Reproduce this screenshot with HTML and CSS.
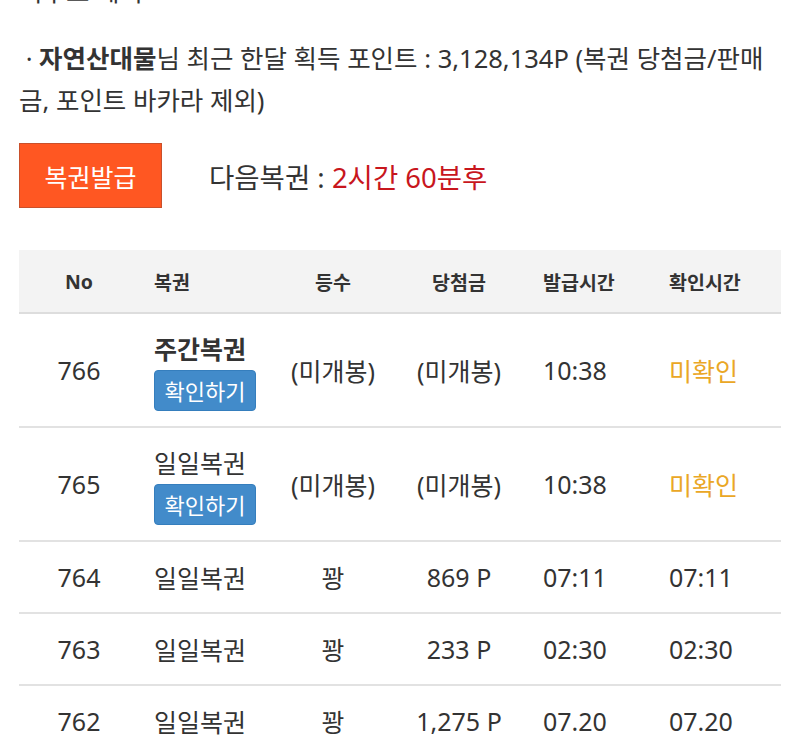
FILE: index.html
```html
<!DOCTYPE html>
<html lang="ko">
<head>
    <meta charset="UTF-8">
    <meta name="viewport" content="width=device-width, initial-scale=1.0">
    <title>복권</title>
    <link rel="stylesheet" href="styles.css">
</head>
<body>
    <!-- Notes -->
    <p class="note cut">서수표 제외</p>
    <p class="note">&nbsp;· <b>자연산대물</b>님 최근 한달 획득 포인트 : 3,128,134P (복권 당첨금/판매금, 포인트 바카라 제외)</p>

    <!-- Issue bar -->
    <div class="issue-bar">
        <button class="issue-btn">복권발급</button>
        <span class="next">다음복권 : <span class="next-time">2시간 60분후</span></span>
    </div>

    <!-- Lottery list -->
    <table class="lotto-table">
        <thead>
            <tr>
                <th class="col-no">No</th>
                <th class="col-name">복권</th>
                <th class="col-rank">등수</th>
                <th class="col-prize">당첨금</th>
                <th class="col-issue">발급시간</th>
                <th class="col-check">확인시간</th>
            </tr>
        </thead>
        <tbody>
            <tr class="tall">
                <td class="col-no">766</td>
                <td class="col-name"><b class="name-bold">주간복권</b><button class="check-btn">확인하기</button></td>
                <td class="col-rank">(미개봉)</td>
                <td class="col-prize">(미개봉)</td>
                <td class="col-issue">10:38</td>
                <td class="col-check unchecked">미확인</td>
            </tr>
            <tr class="tall">
                <td class="col-no">765</td>
                <td class="col-name">일일복권<button class="check-btn">확인하기</button></td>
                <td class="col-rank">(미개봉)</td>
                <td class="col-prize">(미개봉)</td>
                <td class="col-issue">10:38</td>
                <td class="col-check unchecked">미확인</td>
            </tr>
            <tr>
                <td class="col-no">764</td>
                <td class="col-name">일일복권</td>
                <td class="col-rank">꽝</td>
                <td class="col-prize">869 P</td>
                <td class="col-issue">07:11</td>
                <td class="col-check">07:11</td>
            </tr>
            <tr>
                <td class="col-no">763</td>
                <td class="col-name">일일복권</td>
                <td class="col-rank">꽝</td>
                <td class="col-prize">233 P</td>
                <td class="col-issue">02:30</td>
                <td class="col-check">02:30</td>
            </tr>
            <tr>
                <td class="col-no">762</td>
                <td class="col-name">일일복권</td>
                <td class="col-rank">꽝</td>
                <td class="col-prize">1,275 P</td>
                <td class="col-issue">07.20</td>
                <td class="col-check">07.20</td>
            </tr>
        </tbody>
    </table>
</body>
</html>
```

FILE: styles.css
```css
/* Basic Styling */
body {
    font-family: "Noto Sans", "Noto Sans CJK KR", sans-serif;
    margin: 0;
    padding: 0 19px;
    color: #333;
    background-color: #fff;
    font-size: 25px;
    overflow: hidden;
}
/* Notes */
.note {
    margin: 25px 0 0;
    line-height: 42px;
    font-size: 25.5px;
    word-break: break-all;
}
.note.cut { margin-top: -30px; }
.note b { font-weight: bold; }
/* Issue Bar */
.issue-bar {
    display: flex;
    align-items: center;
    margin-top: 22px;
}
.issue-btn {
    width: 143px;
    height: 65px;
    background-color: #ff5722;
    border: 1px solid #c9502b;
    color: #fff;
    font-family: inherit;
    font-size: 25px;
    padding: 0;
    cursor: pointer;
}
.next { margin-left: 47px; font-size: 27.5px; }
.next-time { color: #c8161d; }
/* Table */
.lotto-table {
    width: 100%;
    margin-top: 42px;
    border-collapse: collapse;
    table-layout: fixed;
}
.lotto-table th,
.lotto-table td {
    box-sizing: border-box;
}
.lotto-table th {
    background-color: #f3f3f3;
    height: 63px;
    font-size: 19.5px;
    font-weight: bold;
    border-bottom: 2px solid #ddd;
}
.lotto-table td {
    height: 72px;
    border-bottom: 2px solid #e2e2e2;
    padding-top: 0;
    padding-bottom: 0;
}
.lotto-table tr.tall td { height: 114px; }
.col-no { width: 120px; text-align: center; }
.col-name { width: 136px; text-align: left; padding-left: 15px; }
.col-rank { width: 116px; text-align: center; }
.col-prize { width: 136px; text-align: center; }
.col-issue { width: 128px; text-align: left; padding-left: 16px; }
.col-check { width: 126px; text-align: left; padding-left: 14px; }
.name-bold { font-weight: bold; }
.check-btn {
    display: block;
    margin-top: 4px;
    width: 102px;
    height: 41px;
    background-color: #428bca;
    border: 1px solid #357ebd;
    border-radius: 4px;
    color: #fff;
    font-family: inherit;
    font-size: 22px;
    padding: 0;
    cursor: pointer;
}
.unchecked { color: #eaa726; }
```
